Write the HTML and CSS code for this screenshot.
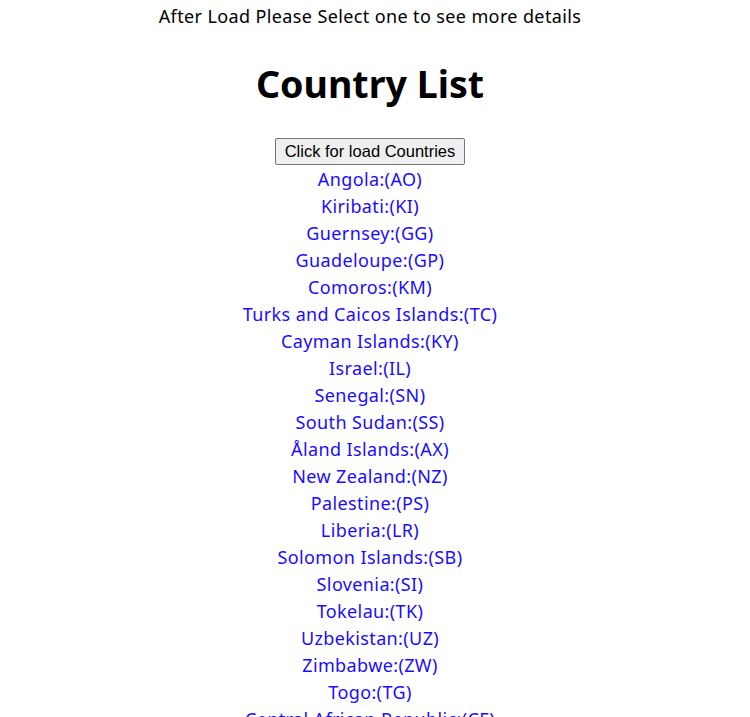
FILE: index.html
```html
<!DOCTYPE html>
<html>
<head>
<meta charset="utf-8">
<link rel="stylesheet" href="styles.css">
</head>
<body>
<div class="page">
  <p class="intro">After Load Please Select one to see more details</p>
  <h1 class="title">Country List</h1>
  <button class="load-btn">Click for load Countries</button>
  <ul class="countries">
    <li><a>Angola:(AO)</a></li>
    <li><a>Kiribati:(KI)</a></li>
    <li><a>Guernsey:(GG)</a></li>
    <li><a>Guadeloupe:(GP)</a></li>
    <li><a>Comoros:(KM)</a></li>
    <li><a>Turks and Caicos Islands:(TC)</a></li>
    <li><a>Cayman Islands:(KY)</a></li>
    <li><a>Israel:(IL)</a></li>
    <li><a>Senegal:(SN)</a></li>
    <li><a>South Sudan:(SS)</a></li>
    <li><a>Åland Islands:(AX)</a></li>
    <li><a>New Zealand:(NZ)</a></li>
    <li><a>Palestine:(PS)</a></li>
    <li><a>Liberia:(LR)</a></li>
    <li><a>Solomon Islands:(SB)</a></li>
    <li><a>Slovenia:(SI)</a></li>
    <li><a>Tokelau:(TK)</a></li>
    <li><a>Uzbekistan:(UZ)</a></li>
    <li><a>Zimbabwe:(ZW)</a></li>
    <li><a>Togo:(TG)</a></li>
    <li><a>Central African Republic:(CF)</a></li>
    <li><a>Nauru:(NR)</a></li>
  </ul>
</div>
</body>
</html>
```
FILE: styles.css
```css
html, body {
  margin: 0;
  padding: 0;
  background: #fff;
}
.page {
  display: flex;
  flex-direction: column;
  align-items: center;
  padding: 3px 10px 0 0;
  font-family: "Noto Sans", sans-serif;
  font-size: 18px;
  letter-spacing: 0.38px;
  line-height: 27px;
  color: #000;
  text-align: center;
}
.intro {
  margin: 0;
}
.title {
  margin: 26px 0 0 0;
  font-size: 37.6px;
  letter-spacing: 0;
  line-height: 56px;
  font-weight: 700;
}
.load-btn {
  margin: 26px 0 1px 0;
  font-family: "Liberation Sans", Arial, sans-serif;
  font-size: 16.5px;
  letter-spacing: 0;
  line-height: 19px;
  padding: 3px 9px;
  background: #efefef;
  border: 1px solid #767676;
  border-radius: 2px;
  color: #000;
}
.countries {
  list-style: none;
  margin: 0;
  padding: 0;
}
.countries a {
  color: #1a0dff;
  cursor: pointer;
}
```
